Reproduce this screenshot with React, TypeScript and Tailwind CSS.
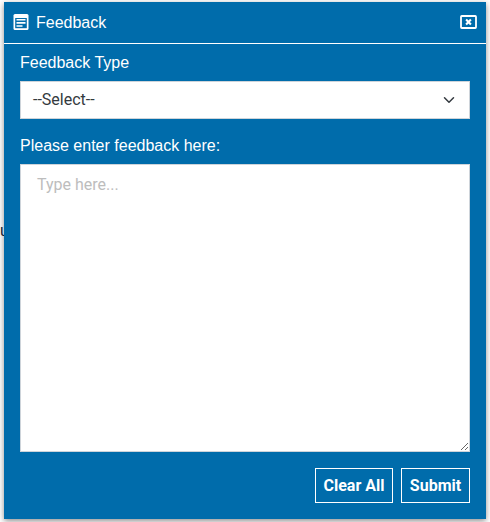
function NoteIcon() {
  return (
    <svg width="16" height="16" viewBox="0 0 16 16" className="relative -top-px shrink-0">
      <rect x="0.5" y="0" width="15" height="16" rx="1.5" fill="#fff" />
      <rect x="2.2" y="4" width="11.6" height="10.2" fill="#006cab" />
      <path d="M3.5 5.8h9M3.5 8.9h9M3.5 12h6" stroke="#fff" strokeWidth="1.6" />
    </svg>
  );
}

function CloseIcon() {
  return (
    <svg width="17" height="14" viewBox="0 0 17 14" className="relative -top-px shrink-0">
      <rect x="1" y="1" width="15" height="12" rx="0.8" fill="none" stroke="#fff" strokeWidth="1.8" />
      <path d="M6.1 4.6l4.8 4.8M10.9 4.6L6.1 9.4" stroke="#fff" strokeWidth="2.1" />
    </svg>
  );
}

export default function App() {
  return (
    <div className="relative h-[522px] w-[490px] overflow-hidden bg-white px-1 pt-0.5 font-['Roboto',sans-serif] text-base">
      <span className="absolute top-[219px] left-0 font-['Liberation_Sans',sans-serif] leading-6 text-[#12243a]">u</span>
      <section className="relative flex h-[517px] w-[482px] flex-col bg-[#006cab] text-white shadow-[0_2px_6px_rgba(0,0,0,0.45)]">
        <header className="flex h-[42px] shrink-0 items-center border-b border-white pr-[9px] pl-[9px] font-['Liberation_Sans',sans-serif]">
          <NoteIcon />
          <h1 className="ml-[7px] flex-1 leading-6">Feedback</h1>
          <button type="button" aria-label="Close">
            <CloseIcon />
          </button>
        </header>
        <div className="flex flex-col px-4 pt-[7px]">
          <label className="font-['Liberation_Sans',sans-serif] leading-6">Feedback Type</label>
          <div className="mt-[6px] flex h-[38px] items-center justify-between border border-[#ced4da] bg-white pr-[14px] pl-3 text-[#343a40]">
            <span>--Select--</span>
            <svg width="12" height="12" viewBox="0 0 16 16" fill="none" stroke="#343a40" strokeWidth="2" strokeLinecap="round" strokeLinejoin="round">
              <path d="m2 5 6 6 6-6" />
            </svg>
          </div>
          <label className="mt-[15px] font-['Liberation_Sans',sans-serif] leading-6">Please enter feedback here:</label>
          <textarea
            placeholder="Type here..."
            className="mt-[6px] block h-[288px] w-full resize border border-[#ced4da] bg-white px-4 py-2 leading-6 text-[#343a40] placeholder:text-[#bdbdbd]"
          />
          <div className="mt-4 flex justify-end gap-2 font-bold">
            <button type="button" className="h-[35px] w-[78px] border border-white">Clear All</button>
            <button type="button" className="h-[35px] w-[69px] border border-white">Submit</button>
          </div>
        </div>
      </section>
    </div>
  );
}
